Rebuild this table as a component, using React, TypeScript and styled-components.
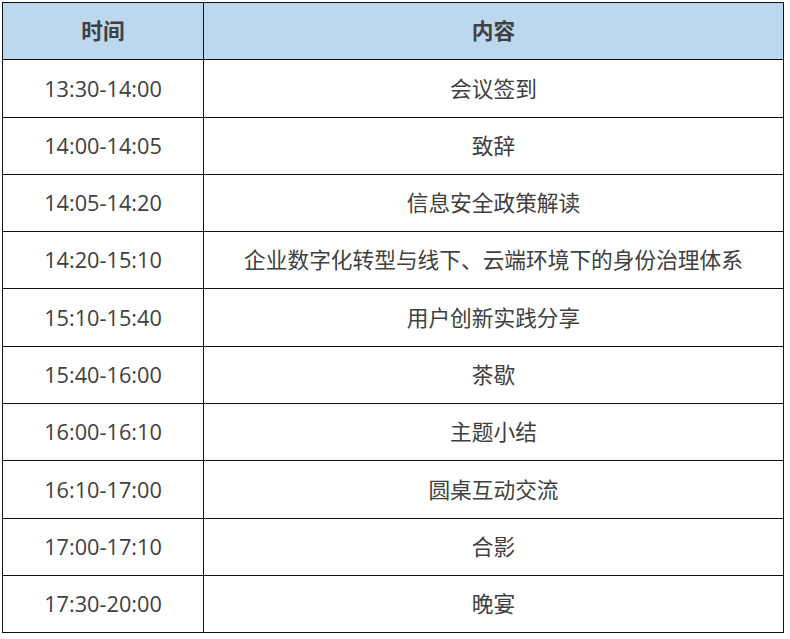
import React from 'react';
import styled, { createGlobalStyle } from 'styled-components';

const GlobalStyle = createGlobalStyle`
  html, body {
    margin: 0;
    padding: 0;
    background: #ffffff;
  }
  body {
    font-family: "Open Sans", "Noto Sans CJK SC", sans-serif;
  }
`;

const agenda = [
  { time: '13:30-14:00', content: '会议签到' },
  { time: '14:00-14:05', content: '致辞' },
  { time: '14:05-14:20', content: '信息安全政策解读' },
  { time: '14:20-15:10', content: '企业数字化转型与线下、云端环境下的身份治理体系' },
  { time: '15:10-15:40', content: '用户创新实践分享' },
  { time: '15:40-16:00', content: '茶歇' },
  { time: '16:00-16:10', content: '主题小结' },
  { time: '16:10-17:00', content: '圆桌互动交流' },
  { time: '17:00-17:10', content: '合影' },
  { time: '17:30-20:00', content: '晚宴' },
];

const App = () => {
  return (
    <>
      <GlobalStyle />
      <Page>
        <Schedule>
          <colgroup>
            <col style={{ width: 201 }} />
            <col />
          </colgroup>
          <thead>
            <tr>
              <HeadCell>时间</HeadCell>
              <HeadCell>内容</HeadCell>
            </tr>
          </thead>
          <tbody>
            {agenda.map(({ time, content }) => (
              <tr key={time}>
                <Cell>{time}</Cell>
                <Cell>{content}</Cell>
              </tr>
            ))}
          </tbody>
        </Schedule>
      </Page>
    </>
  );
};

const Page = styled.div`
  padding: 2px 0 0 2px;
`;

const Schedule = styled.table`
  width: 782px;
  border-collapse: collapse;
  table-layout: fixed;
  color: #404040;
`;

const Cell = styled.td`
  height: 56.3px;
  padding: 0;
  border: 1.5px solid #111111;
  text-align: center;
  vertical-align: middle;
  font-size: 21.7px;
  line-height: 1;
`;

const HeadCell = styled.th`
  height: 56.3px;
  padding: 0;
  border: 1.5px solid #111111;
  background: #bdd7ee;
  text-align: center;
  vertical-align: middle;
  font-size: 21.7px;
  font-weight: 700;
  line-height: 1;
  color: #404040;
`;

export default App;
